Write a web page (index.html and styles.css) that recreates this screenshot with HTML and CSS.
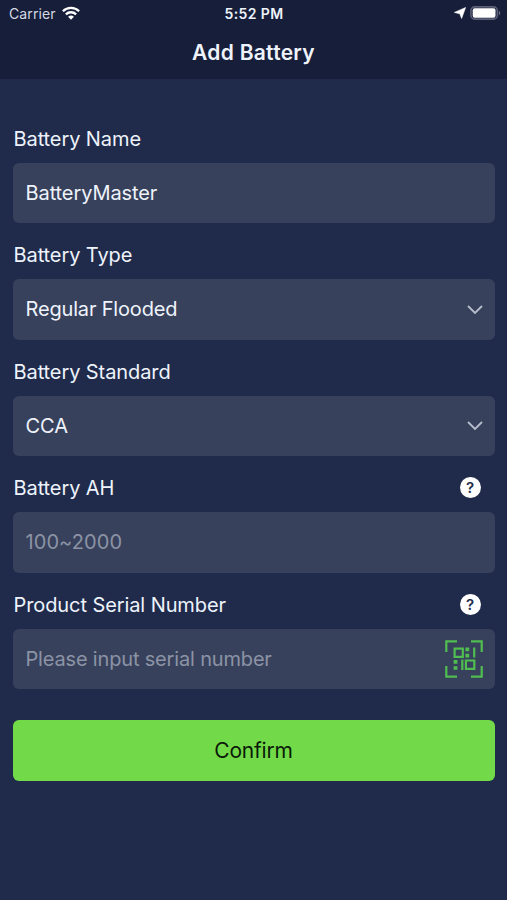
FILE: index.html
```html
<!DOCTYPE html>
<html lang="en">
<head>
<meta charset="utf-8">
<title>Add Battery</title>
<link rel="stylesheet" href="styles.css">
</head>
<body>
<header class="top">
  <div class="status">
    <div class="carrier"><span>Carrier</span>
      <svg width="18" height="14" viewBox="0 0 18 14" fill="none" stroke="#fff" stroke-width="2.3"><path d="M.9 5.2a11.6 11.6 0 0 1 16.2 0M3.9 8.3a7.4 7.4 0 0 1 10.2 0"/><path d="M9 13.7 6.1 10.8a4.2 4.2 0 0 1 5.8 0z" fill="#fff" stroke="none"/></svg>
    </div>
    <time class="time">5:52 PM</time>
    <div class="indicators">
      <svg width="12" height="12" viewBox="0 0 12 12" fill="#fff" stroke="#fff" stroke-width=".6"><path d="M11.6.5 7.6 11.5 5.8 6.8.4 5.4z"/></svg>
      <svg width="31" height="14" viewBox="0 0 31 14"><rect x=".9" y=".9" width="26.4" height="12.2" rx="3.8" fill="none" stroke="#5c6178" stroke-width="1.6"/><rect x="2.7" y="2.3" width="22.8" height="9.4" rx="2" fill="#fff"/><path d="M28.8 4.5q3 2.5 0 5z" fill="#696e84"/></svg>
    </div>
  </div>
  <h1 class="title">Add Battery</h1>
</header>
<main class="form">
  <section class="group">
    <div class="label"><span>Battery Name</span></div>
    <div class="field"><span>BatteryMaster</span></div>
  </section>
  <section class="group">
    <div class="label"><span>Battery Type</span></div>
    <div class="field"><span class="tight">Regular Flooded</span><svg class="chevron" width="16" height="10" viewBox="0 0 16 10"><path d="m1 1 7 7 7-7"/></svg></div>
  </section>
  <section class="group">
    <div class="label"><span>Battery Standard</span></div>
    <div class="field"><span>CCA</span><svg class="chevron" width="16" height="10" viewBox="0 0 16 10"><path d="m1 1 7 7 7-7"/></svg></div>
  </section>
  <section class="group">
    <div class="label"><span>Battery AH</span><span class="help">?</span></div>
    <div class="field hint"><span class="range">100~2000</span></div>
  </section>
  <section class="group">
    <div class="label"><span>Product Serial Number</span><span class="help">?</span></div>
    <div class="field hint"><span class="tight">Please input serial number</span>
      <svg class="scan" width="38" height="38" viewBox="0 0 38 38"><path d="M1.3 12V1.3H12M26 1.3h10.7V12M36.7 26v10.7H26M12 36.7H1.3V26"/><path d="M9.6 8.6h8.2v8.2H9.6zM20.9 20.5h8.4v8.4h-8.4zM29.2 7.6v9.9M17.3 19.6V30"/><path class="dots" d="M20.4 7.6h3.8v3.6h-3.8zM20.4 13.8h3.8v3.6h-3.8zM8.6 20.1h3.8v3.6H8.6zM8.6 26.2h3.8v3.6H8.6z"/></svg>
    </div>
  </section>
  <button class="confirm">Confirm</button>
</main>
</body>
</html>
```

FILE: styles.css
```css
* { box-sizing: border-box; }
body {
  margin: 0;
  min-height: 900px;
  background: #202b4b;
  color: #eef3fb;
  font-family: Inter, "Liberation Sans", sans-serif;
  font-size: 20px;
  letter-spacing: -.09px;
}
.top { height: 79px; background: #171e39; }
.status {
  height: 27px;
  display: grid;
  grid-template-columns: 1fr auto 1fr;
  align-items: center;
  padding: 0 6px 0 9px;
  font-size: 14px;
}
.carrier { display: flex; align-items: center; gap: 6px; color: #d5d9e4; letter-spacing: .12px; }
.carrier svg { margin-top: -2px; }
.time { font-weight: 600; font-size: 14px; letter-spacing: .4px; margin-left: -2px; }
.indicators { display: flex; align-items: center; justify-content: flex-end; gap: 4px; }
.indicators svg { margin-top: -1px; }
.title {
  margin: 0;
  height: 50px;
  display: flex;
  align-items: center;
  justify-content: center;
  font-size: 21px;
  font-weight: 600;
  letter-spacing: .28px;
}
.form { padding: 34.5px 12.5px 0; }
.group { height: 116.5px; }
.label {
  height: 49px;
  display: flex;
  align-items: center;
  justify-content: space-between;
  padding: 0 14px 0 1px;
}
.label span:first-child { padding-top: 1px; }
.field {
  height: 60.5px;
  display: flex;
  align-items: center;
  justify-content: space-between;
  padding: 0 11.5px 0 13px;
  border-radius: 6px;
  background: #38415c;
}
.hint { color: #8b93a5; }
.tight { letter-spacing: -.17px; }
.range { letter-spacing: .08px; }
.help {
  width: 21px;
  height: 21px;
  border-radius: 50%;
  background: #fff;
  color: #202b4b;
  font-size: 15px;
  font-weight: 600;
  line-height: 21px;
  text-align: center;
}
.chevron { fill: none; stroke: #b7bdca; stroke-width: 1.8; margin-top: 1px; }
.scan { fill: none; stroke: #50bd51; stroke-width: 2.2; }
.scan .dots { fill: #50bd51; stroke: none; }
.confirm {
  display: flex;
  align-items: center;
  justify-content: center;
  width: 100%;
  height: 61px;
  margin-top: 24px;
  padding: 0;
  border: 0;
  border-radius: 6px;
  background: #72da48;
  color: #0b1a08;
  font: inherit;
  font-size: 21px;
  letter-spacing: -.2px;
}
```
